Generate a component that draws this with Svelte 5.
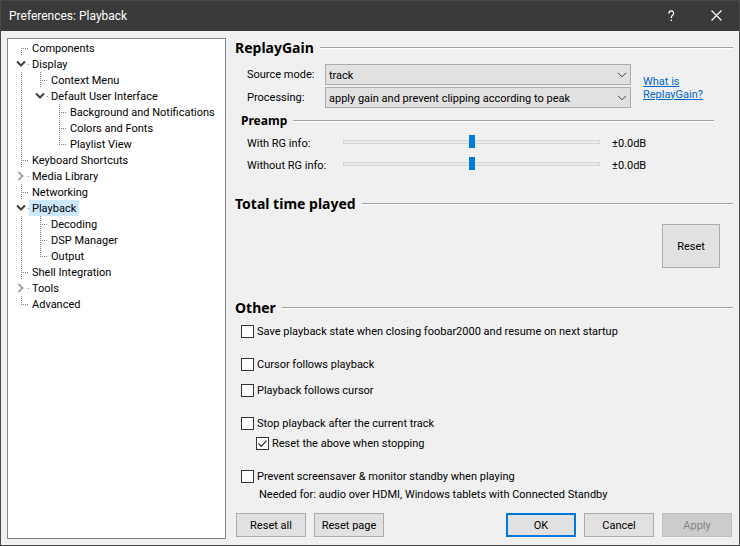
<script>
  let selected = $state('Playback');
  let source = $state('track');
  let processing = $state('apply gain and prevent clipping according to peak');

  // children present -> expandable; open says whether they are listed
  let pages = $state([
    { title: 'Components' },
    {
      title: 'Display',
      open: true,
      children: [
        { title: 'Context Menu' },
        {
          title: 'Default User Interface',
          open: true,
          children: [
            { title: 'Background and Notifications' },
            { title: 'Colors and Fonts' },
            { title: 'Playlist View' },
          ],
        },
      ],
    },
    { title: 'Keyboard Shortcuts' },
    { title: 'Media Library', open: false, children: [] },
    { title: 'Networking' },
    {
      title: 'Playback',
      open: true,
      children: [{ title: 'Decoding' }, { title: 'DSP Manager' }, { title: 'Output' }],
    },
    { title: 'Shell Integration' },
    { title: 'Tools', open: false, children: [] },
    { title: 'Advanced' },
  ]);

  let preamps = $state([
    { id: 'with-rg', label: 'With RG info:', value: 0 },
    { id: 'without-rg', label: 'Without RG info:', value: 0 },
  ]);

  let options = $state([
    { label: 'Save playback state when closing foobar2000 and resume on next startup', checked: false, gap: 'none' },
    { label: 'Cursor follows playback', checked: false, gap: 'large' },
    { label: 'Playback follows cursor', checked: false, gap: 'medium' },
    { label: 'Stop playback after the current track', checked: false, gap: 'large' },
    { label: 'Reset the above when stopping', checked: true, gap: 'small', sub: true },
    { label: 'Prevent screensaver & monitor standby when playing', checked: false, gap: 'large' },
  ]);

  const db = (v) => (v === 0 ? '±' : v > 0 ? '+' : '-') + Math.abs(v).toFixed(1) + 'dB';
</script>

{#snippet branch(nodes)}
  <ul>
    {#each nodes as node (node.title)}
      <li>
        <div class="node">
          {#if node.children}
            <button
              type="button"
              class="expander"
              aria-label="Toggle {node.title}"
              aria-expanded={node.open}
              onclick={() => (node.open = !node.open)}
            >
              <svg width="16" height="16" viewBox="0 0 16 16" fill="none">
                {#if node.open}
                  <path d="M4 5.500l4 4 4-4" stroke="#404040" stroke-width="2" />
                {:else}
                  <path d="M5.500 4l4 4-4 4" stroke="#a6a6a6" stroke-width="2" />
                {/if}
                <path d="M15 8.5h1" stroke="#808080" />
              </svg>
            </button>
          {:else}
            <span class="connector"></span>
          {/if}
          <button
            type="button"
            class="page"
            class:selected={selected === node.title}
            onclick={() => (selected = node.title)}>{node.title}</button
          >
        </div>
        {#if node.open}{@render branch(node.children)}{/if}
      </li>
    {/each}
  </ul>
{/snippet}

<div class="window">
  <header>
    <h1>Preferences: Playback</h1>
    <button type="button" aria-label="Help">
      <svg width="12" height="12" viewBox="0 0 12 12" fill="none" stroke="#fff" stroke-width="1.3">
        <path d="M3 3.4C3 .2 7.6 .2 7.6 3.2C7.6 5.2 5.3 5.2 5.3 7.9M5.3 9.6v1.5" />
      </svg>
    </button>
    <button type="button" aria-label="Close">
      <svg width="12" height="12" viewBox="0 0 12 12" fill="none" stroke="#fff" stroke-width="1.2">
        <path d="M.5 .5l10 10M10.5 .5l-10 10" />
      </svg>
    </button>
  </header>

  <div class="body">
    <nav class="tree">{@render branch(pages)}</nav>

    <main>
      <h2>ReplayGain</h2>
      <div class="gain">
        <label for="source">Source mode:</label>
        <select id="source" bind:value={source}>
          <option>none</option>
          <option>track</option>
          <option>album</option>
        </select>
        <label for="processing">Processing:</label>
        <select id="processing" bind:value={processing}>
          <option>none</option>
          <option>apply gain</option>
          <option>apply gain and prevent clipping according to peak</option>
        </select>
        <a href="#replaygain">What is ReplayGain?</a>
      </div>

      <h3>Preamp</h3>
      <div class="preamp">
        {#each preamps as p (p.id)}
          <label for={p.id}>{p.label}</label>
          <input id={p.id} type="range" min="-20" max="20" step="0.1" bind:value={p.value} />
          <output for={p.id}>{db(p.value)}</output>
        {/each}
      </div>

      <h2 class="total">Total time played</h2>
      <button type="button" class="push reset">Reset</button>

      <h2 class="other">Other</h2>
      <div class="options">
        {#each options as o (o.label)}
          <label class="gap-{o.gap}" class:sub={o.sub}>
            <input type="checkbox" bind:checked={o.checked} />
            {o.label}
          </label>
        {/each}
        <p>Needed for: audio over HDMI, Windows tablets with Connected Standby</p>
      </div>

      <footer>
        <button type="button" class="push">Reset all</button>
        <button type="button" class="push">Reset page</button>
        <button type="button" class="push ok">OK</button>
        <button type="button" class="push">Cancel</button>
        <button type="button" class="push" disabled>Apply</button>
      </footer>
    </main>
  </div>
</div>

<style>
  :global(body) {
    margin: 0;
  }
  .window {
    box-sizing: border-box;
    min-height: 100vh;
    display: flex;
    flex-direction: column;
    border: 1px solid #484848;
    background: #f0f0f0;
    color: #000;
    font: 11px/16px Tahoma, Roboto, sans-serif;
  }
  button,
  select,
  input {
    font: inherit;
    color: inherit;
    margin: 0;
  }
  header {
    display: flex;
    height: 30px;
    background: #3a3a3a;
    color: #fff;
  }
  h1 {
    flex: 1;
    margin: 0;
    padding-left: 8px;
    font: 12px/30px 'Segoe UI', Roboto, sans-serif;
  }
  header button {
    display: flex;
    align-items: center;
    justify-content: center;
    width: 45px;
    padding: 0;
    border: 0;
    background: none;
  }
  .body {
    flex: 1;
    display: flex;
    gap: 9px;
    padding: 7px 6px 6px;
  }

  /* page tree */
  .tree {
    box-sizing: border-box;
    flex: 0 0 219px;
    min-width: 0;
    overflow: hidden;
    padding: 1px 5px;
    border: 1px solid #828790;
    background: #fff;
  }
  ul {
    margin: 0;
    padding: 0;
    list-style: none;
  }
  ul ul {
    margin-left: 19px;
  }
  li {
    background: repeating-linear-gradient(#808080 0 1px, transparent 1px 2px) 8px 0 / 1px 100% no-repeat;
  }
  .tree > ul > li:first-child {
    background-position: 8px 8px;
  }
  li:last-child {
    background-size: 1px 8px;
  }
  .node {
    display: flex;
    height: 16px;
  }
  .expander,
  .connector {
    flex: none;
    width: 16px;
    height: 16px;
    padding: 0;
    border: 0;
  }
  .expander {
    display: flex;
    background: #fff;
  }
  .connector {
    background: repeating-linear-gradient(90deg, #808080 0 1px, transparent 1px 2px) 8px 8px / 9px 1px no-repeat;
  }
  .page {
    padding: 2px 3px 0;
    border: 0;
    background: none;
    line-height: 14px;
    white-space: nowrap;
  }
  .page.selected {
    background: #cce8ff;
  }

  /* settings */
  main {
    flex: 1;
    min-width: 0;
    display: flex;
    flex-direction: column;
  }
  h2,
  h3 {
    display: flex;
    align-items: center;
    gap: 6px;
    margin: 0;
    font-family: Tahoma, 'Noto Sans', sans-serif;
  }
  h2 {
    font-size: 14px;
    line-height: 20px;
  }
  h3 {
    margin: 4px 19px 0 6px;
    font-size: 12px;
    line-height: 18px;
  }
  h2::after,
  h3::after {
    content: '';
    flex: 1;
    height: 1px;
    background: #a0a0a0;
    border-bottom: 1px solid #fff;
  }
  .gain {
    display: grid;
    grid-template-columns: 78px 1fr 90px;
    grid-template-rows: 21px 21px;
    gap: 2px 0;
    align-items: center;
    margin: 6px 12px 0;
  }
  .gain a {
    grid-area: 1 / 3 / 3 / 4;
    padding: 3px 0 0 12px;
    color: #0066cc;
    line-height: 13px;
  }
  select {
    appearance: none;
    width: 100%;
    height: 21px;
    padding: 2px 24px 0 3px;
    border: 1px solid #adadad;
    border-radius: 0;
    background: #e1e1e1
      url("data:image/svg+xml,%3Csvg xmlns='http://www.w3.org/2000/svg' width='10' height='6' fill='none' stroke='%23404040'%3E%3Cpath d='M1 .8l4 4 4-4'/%3E%3C/svg%3E")
      right 3px center no-repeat;
  }
  .preamp {
    display: grid;
    grid-template-columns: 96px 1fr 125px;
    grid-auto-rows: 22px;
    align-items: center;
    margin: 2px 8px 0 12px;
  }
  .preamp label,
  .preamp output {
    padding-top: 2px;
  }
  .preamp output {
    padding-left: 12px;
  }
  input[type='range'] {
    appearance: none;
    width: 100%;
    height: 14px;
    margin-bottom: 3px;
    background: linear-gradient(#e7eaea, #e7eaea) center / calc(100% - 2px) 2px no-repeat,
      linear-gradient(#d6d6d6, #d6d6d6) center / 100% 4px no-repeat;
  }
  input[type='range']::-webkit-slider-thumb {
    appearance: none;
    width: 6px;
    height: 13px;
    background: #007ad9;
  }
  .total {
    margin-top: 18px;
  }
  .other {
    margin-top: 30px;
  }
  .push {
    width: 70px;
    height: 24px;
    padding: 2px 0 0;
    border: 1px solid #adadad;
    background: #e1e1e1;
  }
  .push.reset {
    align-self: flex-end;
    width: 58px;
    height: 44px;
    margin: 10px 13px 0 0;
  }
  .push.ok {
    margin-left: auto;
    border: 2px solid #0078d7;
  }
  .push:disabled {
    border-color: #bfbfbf;
    background: #ccc;
    color: #838383;
  }
  .options {
    display: flex;
    flex-direction: column;
    align-items: flex-start;
    margin: 5px 0 0 6px;
  }
  .options label {
    display: flex;
    gap: 3px;
    height: 16px;
    line-height: 18px;
  }
  .options .sub {
    margin-left: 15px;
  }
  .options .gap-small {
    margin-top: 4px;
  }
  .options .gap-medium {
    margin-top: 10px;
  }
  .options .gap-large {
    margin-top: 17px;
  }
  .options p {
    margin: 3px 0 0 18px;
  }
  input[type='checkbox'] {
    appearance: none;
    width: 13px;
    height: 13px;
    margin-top: 2px;
    border: 1px solid #333;
    background: #fff;
  }
  input[type='checkbox']:checked {
    background: #fff
      url("data:image/svg+xml,%3Csvg xmlns='http://www.w3.org/2000/svg' width='11' height='11' fill='none' stroke='%23333' stroke-width='1.3'%3E%3Cpath d='M1.5 5.5l2.8 2.8L9.6 2.6'/%3E%3C/svg%3E")
      center no-repeat;
  }
  footer {
    display: flex;
    gap: 8px;
    margin-top: auto;
    padding: 8px 1px 2px;
  }
</style>
